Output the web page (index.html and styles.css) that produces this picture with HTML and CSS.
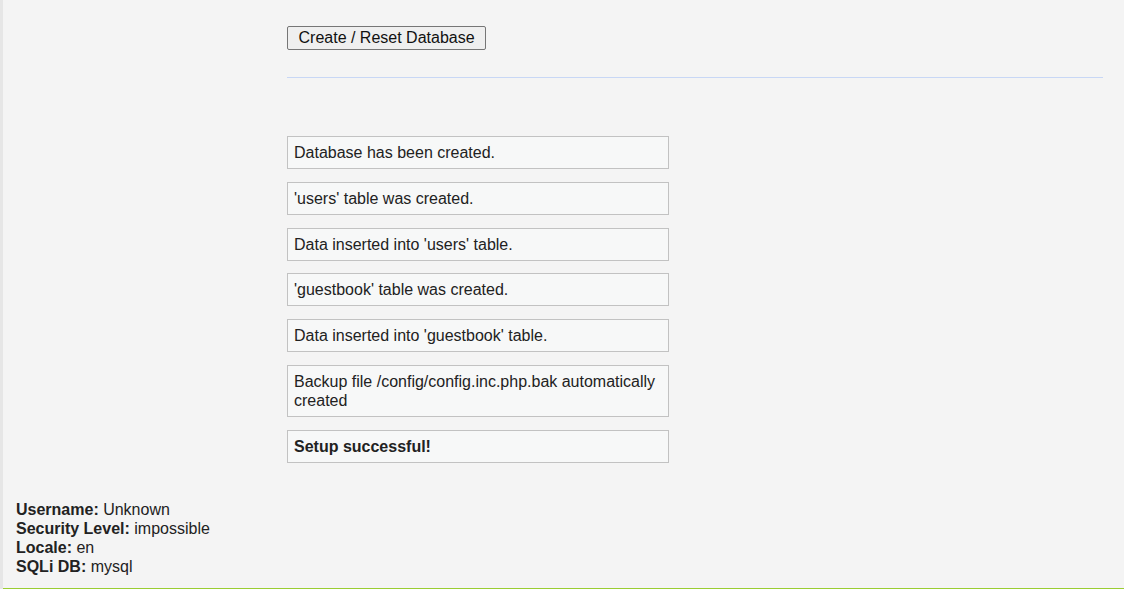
FILE: index.html
```html
<!DOCTYPE html>
<html>
<head>
<meta charset="utf-8">
<link rel="stylesheet" href="styles.css">
</head>
<body>
<div class="page">
  <div class="strip"></div>
  <div class="wrap">
    <div class="top">
      <div class="menu"></div>
      <div class="main">
        <button class="btn" type="button">Create / Reset Database</button>
        <hr class="rule">
        <div class="messages">
          <div class="message">Database has been created.</div>
          <div class="message">'users' table was created.</div>
          <div class="message">Data inserted into 'users' table.</div>
          <div class="message">'guestbook' table was created.</div>
          <div class="message">Data inserted into 'guestbook' table.</div>
          <div class="message">Backup file /config/config.inc.php.bak automatically created</div>
          <div class="message"><b>Setup successful!</b></div>
        </div>
      </div>
    </div>
    <div class="info">
      <div><b>Username:</b> Unknown</div>
      <div><b>Security Level:</b> impossible</div>
      <div><b>Locale:</b> en</div>
      <div><b>SQLi DB:</b> mysql</div>
    </div>
  </div>
</div>
</body>
</html>
```
FILE: styles.css
```css
html, body {
  margin: 0;
  padding: 0;
  background: #f4f4f4;
}
body {
  font-family: "Liberation Sans", Arial, sans-serif;
  font-size: 16px;
  line-height: 19px;
  color: #222;
}
.page {
  display: flex;
  height: 589px;
  overflow: hidden;
}
.strip {
  width: 3px;
  background: #e6e6e6;
  flex: none;
}
.wrap {
  flex: 1;
  display: flex;
  flex-direction: column;
  border-bottom: 1px solid #9acd32;
}
.top {
  flex: 1;
  display: flex;
}
.menu {
  width: 284px;
  flex: none;
}
.main {
  flex: 1;
  padding: 26px 21px 0 0;
}
.btn {
  display: block;
  height: 24px;
  padding: 0 10.5px 1px;
  font-family: "Liberation Sans", Arial, sans-serif;
  font-size: 16px;
  line-height: 19px;
  color: #111;
  background: #efefef;
  border: 1px solid #767676;
  border-radius: 2px;
}
.rule {
  border: 0;
  border-top: 1px solid #c8d7f5;
  margin: 27px 0 0;
  height: 0;
}
.messages {
  margin-top: 58px;
  width: 382px;
  display: flex;
  flex-direction: column;
  gap: 12.8px;
}
.message {
  background: #f7f8f8;
  border: 1px solid #c2c2c2;
  padding: 6px 6px 6px 6px;
}
.info {
  padding: 0 0 12px 13px;
}
```
